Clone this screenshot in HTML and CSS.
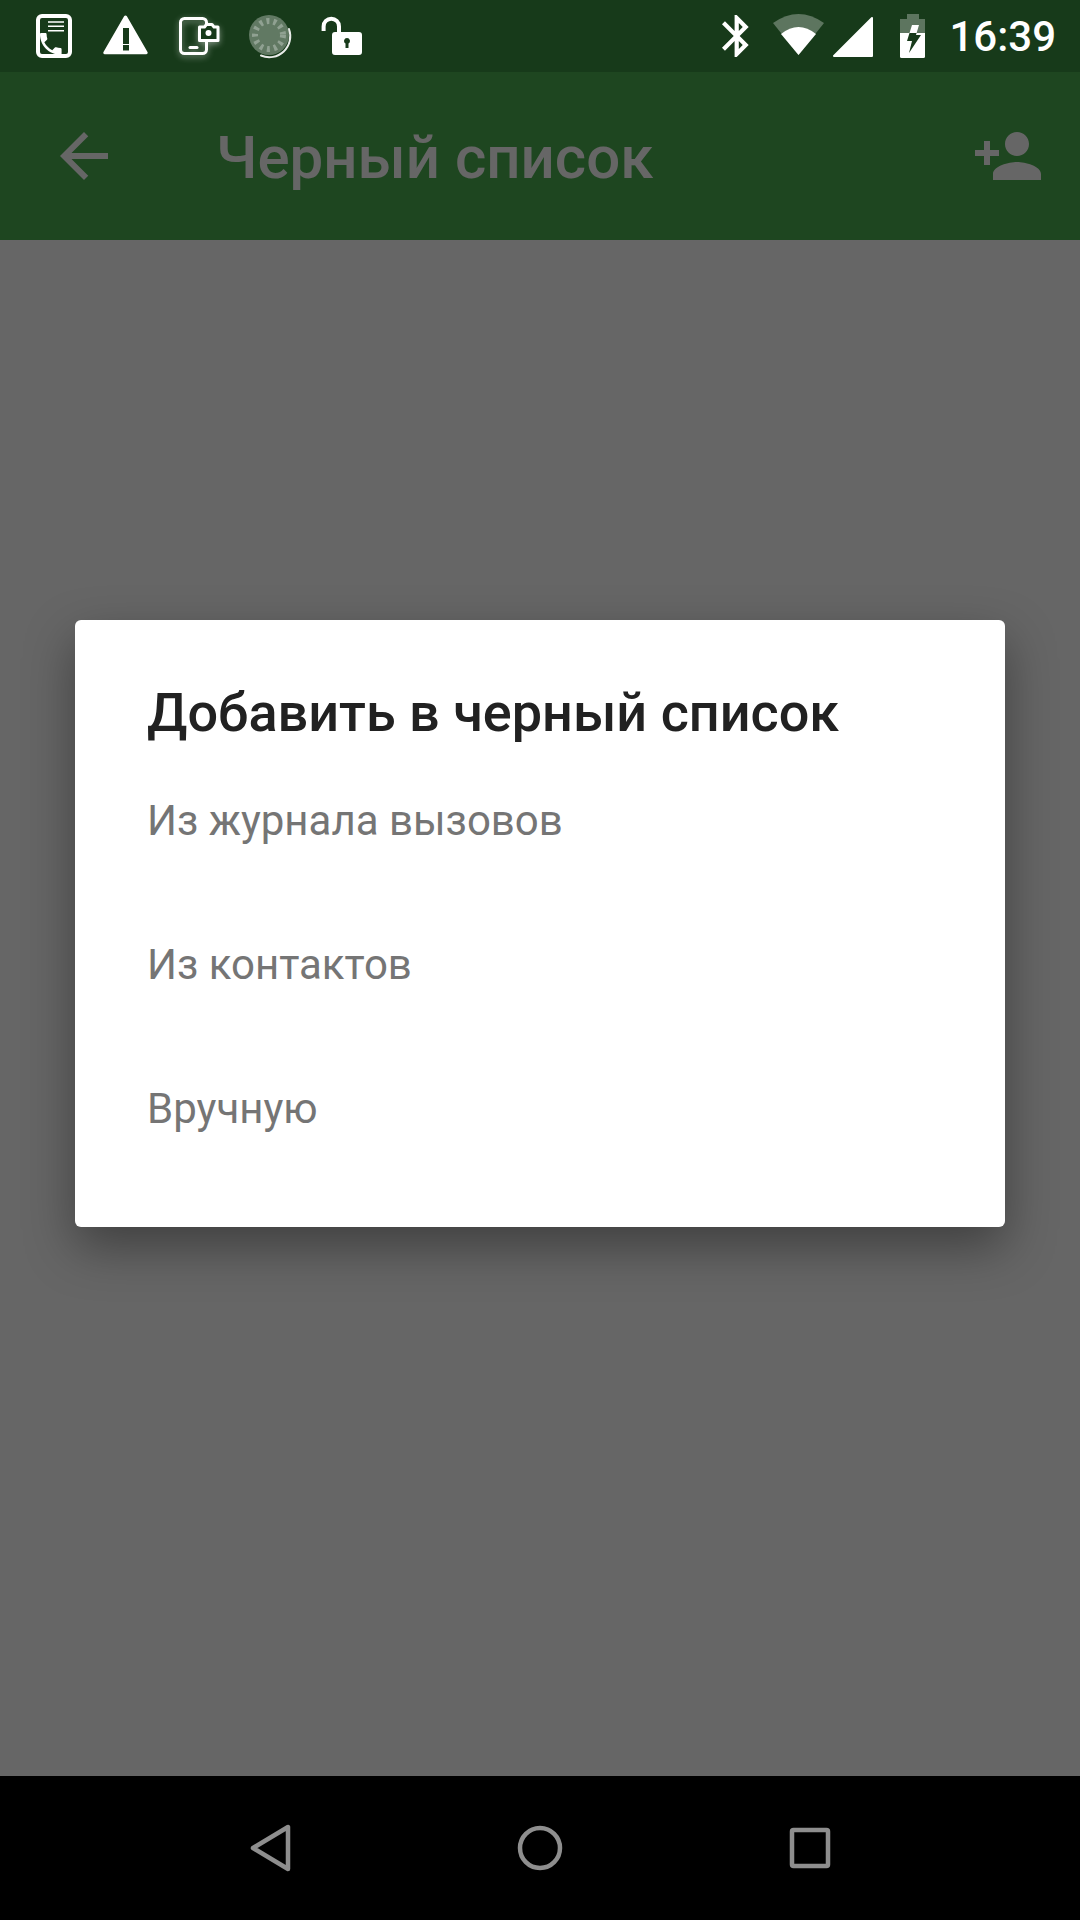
FILE: index.html
```html
<!DOCTYPE html>
<html lang="ru">
<head>
    <meta charset="UTF-8">
    <meta name="viewport" content="width=device-width, initial-scale=1.0">
    <title>Черный список</title>
    <link rel="stylesheet" href="styles.css">
</head>
<body>

    <div class="status-bar">
        <div class="status-left">
            <svg class="status-icon" viewBox="0 0 72 72">
                <rect x="20" y="16" width="32" height="40" rx="4" class="line bold"/>
                <path d="M30 22h16M30 26.3h16M30 30.7h16" class="line thin"/>
                <path transform="translate(18.4 29.4) scale(1.2)" class="solid" d="M6.62 10.79c1.44 2.83 3.76 5.14 6.59 6.59l2.2-2.2c.27-.27.67-.36 1.02-.24 1.12.37 2.33.57 3.57.57.55 0 1 .45 1 1V20c0 .55-.45 1-1 1-9.39 0-17-7.61-17-17 0-.55.45-1 1-1h3.5c.55 0 1 .45 1 1 0 1.25.2 2.45.57 3.57.11.35.03.74-.25 1.02l-2.2 2.2z"/>
            </svg>
            <svg class="status-icon" viewBox="0 0 72 72">
                <path class="solid" fill-rule="evenodd" d="M35.5 15.5c.6 0 1.1.3 1.4.8l20.6 35.7c.6 1-.1 2.2-1.3 2.2H14.8c-1.2 0-1.9-1.2-1.3-2.2l20.6-35.7c.3-.5.8-.8 1.4-.8zM33 28v16h6V28h-6zm0 17v5.500h6V45h-6z"/>
            </svg>
            <svg class="status-icon glow" viewBox="0 0 72 72">
                <rect x="18.500" y="18.500" width="26" height="35" rx="4" class="line"/>
                <path d="M28 47.500h7" class="line"/>
                <path d="M37.500 27h5l2-2.500h5.500l2 2.500h4v13.500h-18.500z" class="cut"/>
                <circle cx="46.500" cy="33" r="3" class="solid"/>
            </svg>
            <svg class="status-icon" viewBox="0 0 72 72">
                <circle cx="35" cy="35" r="20" class="solid dim"/>
                <circle cx="35" cy="35" r="14" class="ticks"/>
                <path d="M27 55.500A21 21 0 0 0 55 29" class="line edge"/>
            </svg>
            <svg class="status-icon" viewBox="0 0 72 72">
                <path d="M17.600 31V26.400a7.700 7.700 0 0 1 15.400 0V32" class="line thick"/>
                <path class="solid" fill-rule="evenodd" d="M29 32h24a3 3 0 0 1 3 3v17a3 3 0 0 1-3 3H29a3 3 0 0 1-3-3V35a3 3 0 0 1 3-3zm12 6a3 3 0 0 0-1.500 5.600V48h3v-4.400A3 3 0 0 0 41 38z"/>
            </svg>
        </div>
        <div class="status-right">
            <svg class="bt-icon" viewBox="0 0 54 72">
                <path transform="translate(.5 10.800) scale(2.100)" class="solid" d="M17.710 7.710L12 2h-1v7.590L6.410 5 5 6.410 10.590 12 5 17.590 6.410 19 11 14.410V22h1l5.710-5.710-4.300-4.290 4.300-4.290zM13 5.830l1.880 1.880L13 9.590V5.830zm1.880 10.460L13 18.170v-3.760l1.880 1.880z"/>
            </svg>
            <svg class="wifi-icon" viewBox="0 0 64 72">
                <path d="M8 23Q33.500 5 59 23L33.500 55z" class="solid faint"/>
                <path d="M16 34Q33.500 20 51 34L33.500 55z" class="solid"/>
            </svg>
            <svg class="bt-icon" viewBox="0 0 54 72">
                <path d="M43 18V56H5z" class="solid rounded"/>
            </svg>
            <svg class="bt-icon" viewBox="0 0 54 72">
                <path d="M24 14h12v5h6v14H17V19h7z" class="solid faint"/>
                <path d="M17 33h25v23.500a1.500 1.500 0 0 1-1.500 1.500h-22a1.500 1.500 0 0 1-1.500-1.500z" class="solid"/>
                <path d="M29 25h7l-2.400 8h-7.100z" class="solid"/>
                <path d="M26.500 33h7.100l-.6 2h5L26 53l3-12h-5z" class="hole"/>
            </svg>
            <span class="clock">16:39</span>
        </div>
    </div>

    <div class="main">
        <div class="toolbar">
            <svg class="tool-icon" viewBox="0 0 24 24">
                <path d="M20 11H7.830l5.590-5.590L12 4l-8 8 8 8 1.410-1.410L7.830 13H20v-2z"/>
            </svg>
            <h1 class="toolbar-title">Черный список</h1>
            <svg class="tool-icon" viewBox="0 0 24 24">
                <path d="M15 12c2.210 0 4-1.790 4-4s-1.790-4-4-4-4 1.790-4 4 1.790 4 4 4zm-9-2V7H4v3H1v2h3v3h2v-3h3v-2H6zm9 4c-2.670 0-8 1.340-8 4v2h16v-2c0-2.660-5.330-4-8-4z"/>
            </svg>
        </div>
        <div class="page"></div>

        <div class="scrim">
            <div class="dialog">
                <h2 class="dialog-title">Добавить в черный список</h2>
                <div class="dialog-item">Из журнала вызовов</div>
                <div class="dialog-item">Из контактов</div>
                <div class="dialog-item">Вручную</div>
            </div>
        </div>
    </div>

    <div class="nav-bar">
        <svg class="nav-icon" viewBox="0 0 72 72"><path d="M54 15V57L19 36z"/></svg>
        <svg class="nav-icon" viewBox="0 0 72 72"><circle cx="36" cy="36" r="20"/></svg>
        <svg class="nav-icon" viewBox="0 0 72 72"><rect x="18" y="18" width="36" height="36" rx="1.500"/></svg>
    </div>

</body>
</html>
```

FILE: styles.css
```css
html, body {
    margin: 0;
    padding: 0;
    height: 100%;
}

body {
    display: flex;
    flex-direction: column;
    height: 1920px;
    overflow: hidden;
    font-family: Roboto, "Noto Sans", sans-serif;
    background-color: #000000;
}

.status-bar {
    display: flex;
    justify-content: space-between;
    height: 72px;
    padding: 0 24px 0 18px;
    background-color: #173a1a;
}

.status-left, .status-right {
    display: flex;
    align-items: center;
}

.status-icon {
    width: 72px;
    height: 72px;
}

.bt-icon {
    width: 54px;
    height: 72px;
}

.wifi-icon {
    width: 64px;
    height: 72px;
}

.solid {
    fill: #ffffff;
}

.faint {
    fill-opacity: 0.3;
}

.dim {
    fill-opacity: 0.32;
}

.rounded {
    stroke: #ffffff;
    stroke-width: 2;
    stroke-linejoin: round;
}

.hole {
    fill: #173a1a;
}

.line {
    fill: none;
    stroke: #ffffff;
    stroke-width: 3;
    stroke-linecap: round;
    stroke-linejoin: round;
}

.bold {
    stroke-width: 4;
}

.thin {
    stroke-width: 1.5;
    stroke-linecap: butt;
}

.thick {
    stroke-width: 4;
    stroke-linecap: butt;
}

.edge {
    stroke-width: 2;
    stroke-opacity: 0.9;
}

.cut {
    fill: #173a1a;
    stroke: #ffffff;
    stroke-width: 3;
    stroke-linejoin: round;
}

.ticks {
    fill: none;
    stroke: #ffffff;
    stroke-opacity: 0.3;
    stroke-width: 6;
    stroke-dasharray: 3 4;
}

.glow {
    filter: drop-shadow(0 2px 3px rgba(255, 255, 255, 0.45));
}

.clock {
    margin-left: 12px;
    font-size: 42px;
    font-weight: 500;
    color: #ffffff;
}

.main {
    position: relative;
    flex: 1;
    display: flex;
    flex-direction: column;
    background-color: #ffffff;
}

.toolbar {
    display: flex;
    align-items: center;
    height: 168px;
    padding: 0 36px 0 48px;
    background-color: #4caf50;
}

.tool-icon {
    flex: none;
    width: 72px;
    height: 72px;
    fill: #ffffff;
}

.toolbar-title {
    flex: 1;
    margin: 3px 0 0 96px;
    font-size: 60px;
    font-weight: 500;
    color: #ffffff;
}

.page {
    flex: 1;
}

.scrim {
    position: absolute;
    top: 0;
    left: 0;
    right: 0;
    bottom: 0;
    display: flex;
    justify-content: center;
    align-items: center;
    padding-bottom: 1px;
    background: rgba(0, 0, 0, 0.6);
}

.dialog {
    box-sizing: border-box;
    width: 930px;
    height: 607px;
    padding: 57px 72px 0;
    background-color: #ffffff;
    border-radius: 6px;
    box-shadow: 0 20px 50px rgba(0, 0, 0, 0.38);
}

.dialog-title {
    margin: 0;
    font-size: 54px;
    line-height: 72px;
    font-weight: 500;
    color: #212121;
}

.dialog-item {
    height: 144px;
    line-height: 144px;
    font-size: 42px;
    color: #757575;
}

.nav-bar {
    display: flex;
    justify-content: center;
    align-items: center;
    gap: 198px;
    height: 144px;
    background-color: #000000;
}

.nav-icon {
    width: 72px;
    height: 72px;
    fill: none;
    stroke: #8e8e8e;
    stroke-width: 4.5;
    stroke-linejoin: round;
}
```
